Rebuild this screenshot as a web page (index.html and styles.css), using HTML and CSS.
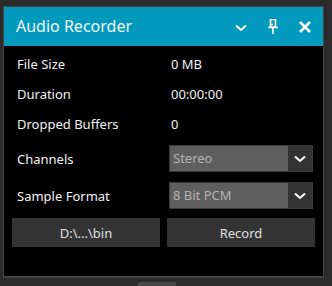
FILE: index.html
```html
<!DOCTYPE html>
<html>
<head>
  <title>Audio Recorder</title>
  <link rel="stylesheet" href="styles.css">
</head>
<body>
  <div class="window">
    <div class="titlebar">
      <span class="title">Audio Recorder</span>
      <div class="title-icons">
        <svg class="ico-chev" width="12" height="8" viewBox="0 0 12 8"><path d="M1 1.5 L6 6 L11 1.5" fill="none" stroke="#fff" stroke-width="2"/></svg>
        <svg class="ico-pin" width="12" height="15" viewBox="0 0 12 15"><path d="M3.5 0.5 H8.5 V8 H3.5 Z M3.5 5.5 H6 M1 8.5 H11 M6 8.5 V15" fill="none" stroke="#fff" stroke-width="1.6"/></svg>
        <svg class="ico-close" width="12" height="12" viewBox="0 0 12 12"><path d="M1 1 L11 11 M11 1 L1 11" fill="none" stroke="#fff" stroke-width="2.6"/></svg>
      </div>
    </div>
    <div class="content">
      <div class="row"><span class="label">File Size</span><span class="value">0 MB</span></div>
      <div class="row"><span class="label">Duration</span><span class="value">00:00:00</span></div>
      <div class="row"><span class="label">Dropped Buffers</span><span class="value">0</span></div>
      <div class="row combo-row">
        <span class="label">Channels</span>
        <div class="combo"><span class="combo-text">Stereo</span><span class="combo-btn"><svg width="12" height="8" viewBox="0 0 12 8"><path d="M1 1.5 L6 6 L11 1.5" fill="none" stroke="#fff" stroke-width="2"/></svg></span></div>
      </div>
      <div class="row combo-row second">
        <span class="label">Sample Format</span>
        <div class="combo"><span class="combo-text">8 Bit PCM</span><span class="combo-btn"><svg width="12" height="8" viewBox="0 0 12 8"><path d="M1 1.5 L6 6 L11 1.5" fill="none" stroke="#fff" stroke-width="2"/></svg></span></div>
      </div>
      <div class="buttons">
        <button>D:\...\bin</button>
        <button>Record</button>
      </div>
    </div>
  </div>
  <div class="grip"></div>
</body>
</html>
```

FILE: styles.css
```css
body {
  margin: 0;
  background-color: #2b2b2b;
  font-family: 'Noto Sans', 'Open Sans', sans-serif;
  color: #f2f2f2;
  width: 332px;
  height: 286px;
  overflow: hidden;
}
.window {
  margin: 6px 0 0 3px;
  width: 319px;
  height: 269px;
  border: 1px solid #444;
  border-bottom-width: 2px;
  background-color: #000;
}
.titlebar {
  height: 39px;
  background-color: #019abd;
  display: flex;
  align-items: center;
  justify-content: space-between;
  padding: 0 12px 0 12px;
}
.title {
  font-size: 16px;
  color: #f4f4f4;
  margin-top: -1px;
}
.title-icons {
  display: flex;
  align-items: center;
}
.ico-chev {
  margin-right: 20px;
  margin-top: 2px;
}
.ico-pin {
  margin-right: 20px;
}
.content {
  padding: 3px 7px 0 8px;
}
.row {
  display: flex;
  align-items: center;
  height: 30px;
  font-size: 13px;
}
.label {
  width: 157px;
  padding-left: 5px;
  box-sizing: border-box;
}
.value {
  padding-left: 2px;
}
.combo-row {
  height: 27px;
  margin-top: 6px;
}
.combo-row.second {
  margin-top: 10px;
}
.combo {
  width: 144px;
  height: 27px;
  box-sizing: border-box;
  border: 1px solid #3a3a3a;
  background-color: #5e5e5e;
  display: flex;
}
.combo-text {
  flex-grow: 1;
  padding-left: 3px;
  line-height: 25px;
  color: #b4b4b4;
}
.combo-btn {
  width: 24px;
  background-color: #333;
  display: flex;
  align-items: center;
  justify-content: center;
}
.buttons {
  display: flex;
  gap: 7px;
  margin-top: 9px;
}
.buttons button {
  width: 148px;
  height: 29px;
  border: none;
  background-color: #333;
  color: #e0e0e0;
  font-family: 'Noto Sans', 'Open Sans', sans-serif;
  font-size: 13px;
  padding: 0;
}
.grip {
  width: 38px;
  height: 4px;
  background-color: #4a4a4a;
  margin: 4px 0 0 138px;
}
```
